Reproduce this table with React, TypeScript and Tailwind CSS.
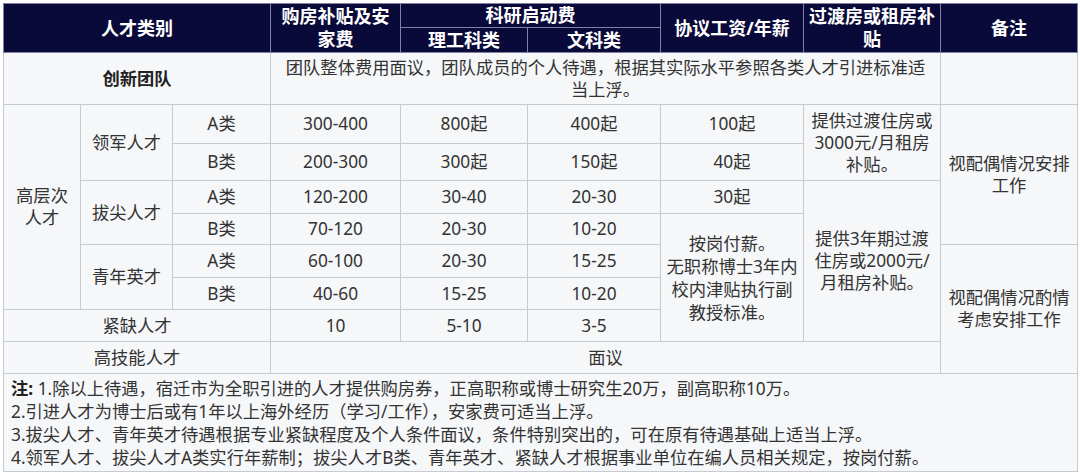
import React from "react";

const th =
  "border border-[#7f82a3] bg-[#0a0a3a] text-white font-bold text-[18px] leading-[23px] text-center align-middle p-0";
const td =
  "border border-[#c8cad1] text-center align-middle p-0 leading-[22px]";

const App: React.FC = () => {
  return (
    <div className="w-[1080px] h-[472px] bg-white pt-[3px] pl-[3px] font-['Noto_Sans','Noto_Sans_CJK_SC',sans-serif] text-[17.3px] text-[#333]">
      <table className="w-[1074px] table-fixed border-collapse bg-[#f6f7f9]">
        <colgroup>
          <col className="w-[77px]" />
          <col className="w-[92px]" />
          <col className="w-[98px]" />
          <col className="w-[130px]" />
          <col className="w-[127px]" />
          <col className="w-[133px]" />
          <col className="w-[143px]" />
          <col className="w-[137px]" />
          <col className="w-[137px]" />
        </colgroup>
        <thead>
          <tr className="h-[23px]">
            <th colSpan={3} rowSpan={2} className={th}>
              人才类别
            </th>
            <th rowSpan={2} className={th}>
              购房补贴及安
              <br />
              家费
            </th>
            <th colSpan={2} className={th}>
              科研启动费
            </th>
            <th rowSpan={2} className={th}>
              协议工资/年薪
            </th>
            <th rowSpan={2} className={th}>
              过渡房或租房补
              <br />贴
            </th>
            <th rowSpan={2} className={th}>
              备注
            </th>
          </tr>
          <tr className="h-[25px]">
            <th className={th}>理工科类</th>
            <th className={th}>文科类</th>
          </tr>
        </thead>
        <tbody>
          {/* 创新团队 */}
          <tr className="h-[52px]">
            <td colSpan={3} className={`${td} font-bold text-[#222]`}>
              创新团队
            </td>
            <td colSpan={5} className={td}>
              团队整体费用面议，团队成员的个人待遇，根据其实际水平参照各类人才引进标准适
              <br />
              当上浮。
            </td>
            <td className={td}></td>
          </tr>

          {/* 高层次人才 */}
          <tr className="h-[39px]">
            <td rowSpan={6} className={td}>
              高层次
              <br />
              人才
            </td>
            <td rowSpan={2} className={td}>
              领军人才
            </td>
            <td className={td}>A类</td>
            <td className={td}>300-400</td>
            <td className={td}>800起</td>
            <td className={td}>400起</td>
            <td className={td}>100起</td>
            <td rowSpan={2} className={td}>
              提供过渡住房或
              <br />
              3000元/月租房
              <br />
              补贴。
            </td>
            <td rowSpan={4} className={td}>
              视配偶情况安排
              <br />
              工作
            </td>
          </tr>
          <tr className="h-[37px]">
            <td className={td}>B类</td>
            <td className={td}>200-300</td>
            <td className={td}>300起</td>
            <td className={td}>150起</td>
            <td className={td}>40起</td>
          </tr>
          <tr className="h-[33px]">
            <td rowSpan={2} className={td}>
              拔尖人才
            </td>
            <td className={td}>A类</td>
            <td className={td}>120-200</td>
            <td className={td}>30-40</td>
            <td className={td}>20-30</td>
            <td className={td}>30起</td>
            <td rowSpan={5} className={td}>
              提供3年期过渡
              <br />
              住房或2000元/
              <br />
              月租房补贴。
            </td>
          </tr>
          <tr className="h-[31px]">
            <td className={td}>B类</td>
            <td className={td}>70-120</td>
            <td className={td}>20-30</td>
            <td className={td}>10-20</td>
            <td rowSpan={4} className={`${td} leading-[23px]`}>
              按岗付薪。
              <br />
              无职称博士3年内
              <br />
              校内津贴执行副
              <br />
              教授标准。
            </td>
          </tr>
          <tr className="h-[33px]">
            <td rowSpan={2} className={td}>
              青年英才
            </td>
            <td className={td}>A类</td>
            <td className={td}>60-100</td>
            <td className={td}>20-30</td>
            <td className={td}>15-25</td>
            <td rowSpan={4} className={td}>
              视配偶情况酌情
              <br />
              考虑安排工作
            </td>
          </tr>
          <tr className="h-[32px]">
            <td className={td}>B类</td>
            <td className={td}>40-60</td>
            <td className={td}>15-25</td>
            <td className={td}>10-20</td>
          </tr>

          {/* 紧缺 / 高技能 */}
          <tr className="h-[32px]">
            <td colSpan={3} className={td}>
              紧缺人才
            </td>
            <td className={td}>10</td>
            <td className={td}>5-10</td>
            <td className={td}>3-5</td>
          </tr>
          <tr className="h-[32px]">
            <td colSpan={3} className={td}>
              高技能人才
            </td>
            <td colSpan={5} className={td}>
              面议
            </td>
          </tr>

          {/* Notes */}
          <tr className="h-[98px]">
            <td
              colSpan={9}
              className="border border-[#c8cad1] text-left align-middle px-[7px] leading-[23px]"
            >
              <span className="font-bold text-[#222]">注:</span> 1.除以上待遇，宿迁市为全职引进的人才提供购房券，正高职称或博士研究生20万，副高职称10万。
              <br />
              2.引进人才为博士后或有1年以上海外经历（学习/工作），安家费可适当上浮。
              <br />
              3.拔尖人才、青年英才待遇根据专业紧缺程度及个人条件面议，条件特别突出的，可在原有待遇基础上适当上浮。
              <br />
              4.领军人才、拔尖人才A类实行年薪制；拔尖人才B类、青年英才、紧缺人才根据事业单位在编人员相关规定，按岗付薪。
            </td>
          </tr>
        </tbody>
      </table>
    </div>
  );
};

export default App;
